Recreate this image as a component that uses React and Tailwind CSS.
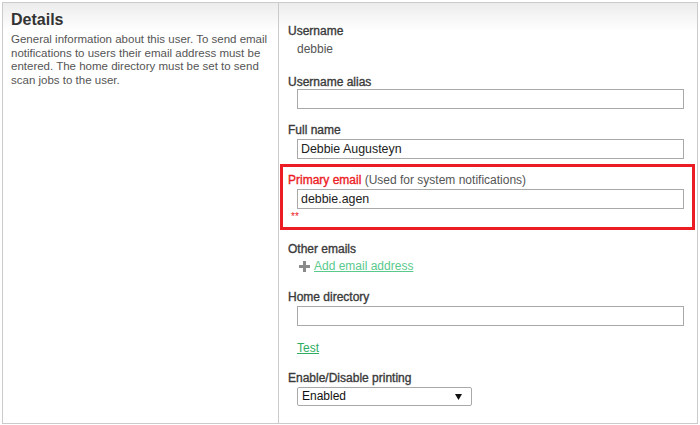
import React from "react";

const Label = ({ children, className = "" }) => (
  <div className={`text-[12px] leading-[14px] text-[#3a3a3a] [-webkit-text-stroke:0.35px_#3a3a3a] ${className}`}>
    {children}
  </div>
);

const TextBox = ({ value = "", className = "" }) => (
  <div
    className={`ml-[9px] w-[387px] h-[20px] border border-[#a9a9a9] bg-white px-[3px] text-[12.4px] leading-[18px] text-[#222] ${className}`}
  >
    {value}
  </div>
);

const PlusIcon = () => (
  <svg width="11" height="11" viewBox="0 0 11 11" className="shrink-0">
    <rect x="4" y="0" width="3" height="11" fill="#8a8a8a" />
    <rect x="0" y="4" width="11" height="3" fill="#8a8a8a" />
  </svg>
);

const App = () => {
  return (
    <div
      className="m-[2px] w-[696px] h-[422px] border border-[#cbcbcb] flex bg-white"
      style={{ fontFamily: '"Liberation Sans", Arial, sans-serif' }}
    >
      {/* left column */}
      <div className="w-[276px] shrink-0 border-r border-[#cbcbcb] bg-[linear-gradient(#ececec,#ffffff_28px)] pl-[8px] pr-[6px] pt-[8px]">
        <h1 className="text-[16px] leading-[18px] font-bold text-[#333]">Details</h1>
        <p className="mt-[4px] text-[11.5px] leading-[13.5px] text-[#555]">
          General information about this user. To send email notifications to users their email address must be
          entered. The home directory must be set to send scan jobs to the user.
        </p>
      </div>

      {/* right column */}
      <div className="flex-1 bg-[linear-gradient(#ececec,#ffffff_28px)] pt-[21px]">
        <div className="pl-[9px]">
          <Label>Username</Label>
          <div className="mt-[4px] pl-[9px] text-[12px] leading-[14px] text-[#555]">debbie</div>

          <Label className="mt-[19px]">Username alias</Label>
          <TextBox className="mt-0" />

          <Label className="mt-[14px]">Full name</Label>
          <TextBox className="mt-[2px]" value="Debbie Augusteyn" />
        </div>

        <div className="mt-[5px] ml-[1px] w-[415px] border-[3px] border-[#ec1c24] pl-[5px] pt-[6px] pb-[4px]">
          <div className="text-[12px] leading-[14px] text-[#555]">
            <span className="text-[#ec1c24] [-webkit-text-stroke:0.35px_#ec1c24]">Primary email</span> (Used for
            system notifications)
          </div>
          <TextBox className="mt-[2px]" value="debbie.agen" />
          <div className="mt-[2px] ml-[3px] h-[12px] text-[10px] leading-[12px] text-[#ec1c24]">**</div>
        </div>

        <div className="pl-[9px]">
          <Label className="mt-[12px]">Other emails</Label>
          <div className="mt-[3px] ml-[11px] flex items-center gap-[4px] h-[14px]">
            <PlusIcon />
            <a href="#" className="text-[12px] leading-[14px] text-[#5ac98d] underline">
              Add email address
            </a>
          </div>

          <Label className="mt-[17px]">Home directory</Label>
          <TextBox className="mt-[2px]" />

          <div className="mt-[9px] ml-[9px] h-[14px]">
            <a href="#" className="text-[12px] leading-[14px] text-[#2fae62] underline">
              Test
            </a>
          </div>

          <Label className="mt-[22px]">Enable/Disable printing</Label>
          <div className="mt-[2px] ml-[9px] w-[175px] h-[19px] border border-[#a9a9a9] rounded-[2px] bg-white flex items-center justify-between pl-[4px] pr-[9px]">
            <span className="text-[12px] leading-[17px] text-[#111]">Enabled</span>
            <svg width="7" height="6" viewBox="0 0 7 6">
              <path d="M0 0 L7 0 L3.5 6 Z" fill="#111" />
            </svg>
          </div>
        </div>
      </div>
    </div>
  );
};

export default App;
